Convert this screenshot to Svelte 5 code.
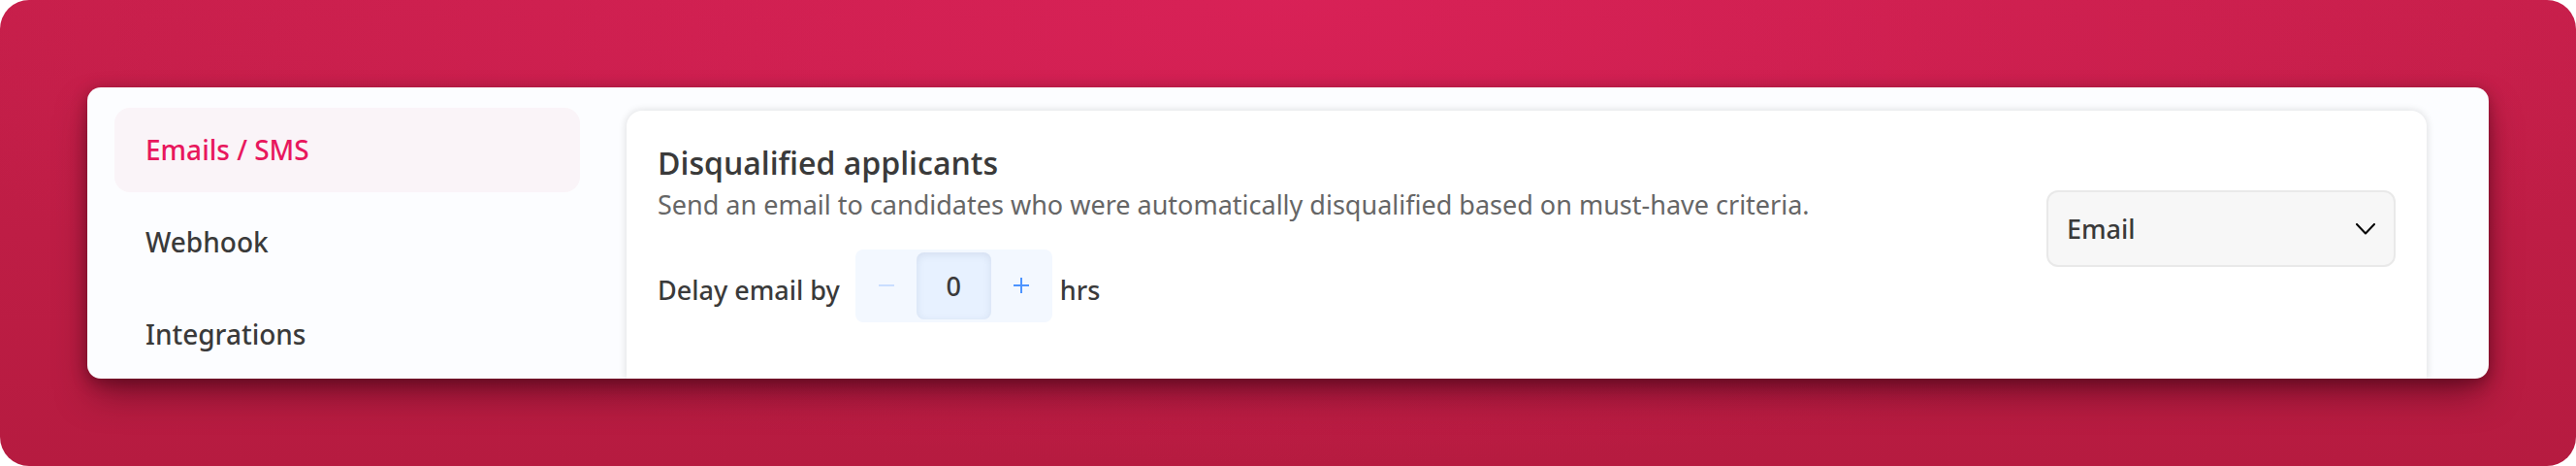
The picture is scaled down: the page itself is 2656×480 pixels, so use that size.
<script lang="ts">
  interface NavItem {
    id: string;
    label: string;
  }

  const navItems: NavItem[] = [
    { id: 'emails', label: 'Emails / SMS' },
    { id: 'webhook', label: 'Webhook' },
    { id: 'integrations', label: 'Integrations' },
  ];

  const channels = ['Email', 'SMS'];

  let currentItem = 'emails';
  let channel = 'Email';
  let delay = 0;

  function changeDelay(step: number) {
    delay = Math.max(0, Number(delay) + step);
  }
</script>

<main class="backdrop">
  <div class="panel">
    <nav class="sidebar">
      {#each navItems as item}
        <a
          href="#{item.id}"
          class:active={currentItem === item.id}
          on:click={() => currentItem = item.id}
        >{item.label}</a>
      {/each}
    </nav>

    <section class="card">
      <div class="details">
        <h2>Disqualified applicants</h2>
        <p class="description">
          Send an email to candidates who were automatically disqualified based on must-have criteria.
        </p>

        <div class="delay-row">
          <label for="delay">Delay email by</label>
          <div class="stepper">
            <button aria-label="Decrease" disabled={delay <= 0} on:click={() => changeDelay(-1)}>
              <svg viewBox="0 0 17 17" width="17" height="17">
                <path d="M1 8h16" />
              </svg>
            </button>
            <input id="delay" type="text" inputmode="numeric" bind:value={delay} />
            <button aria-label="Increase" on:click={() => changeDelay(1)}>
              <svg viewBox="0 0 17 17" width="17" height="17">
                <path d="M0 8h16M8 0v16" />
              </svg>
            </button>
          </div>
          <span class="unit">hrs</span>
        </div>
      </div>

      <div class="select-box">
        <select aria-label="Channel" bind:value={channel}>
          {#each channels as c}
            <option value={c}>{c}</option>
          {/each}
        </select>
        <svg class="chevron" viewBox="0 0 20 12" width="20" height="12">
          <path d="M1 1l9 9.500l9-9.500" />
        </svg>
      </div>
    </section>
  </div>
</main>

<style>
  :global(body) {
    margin: 0;
    background: #fff;
    color: #3a3a3a;
    font-family: "Noto Sans", "Open Sans", sans-serif;
  }

  .backdrop {
    box-sizing: border-box;
    min-height: 100vh;
    padding: 90px;
    border-radius: 30px;
    background:
      radial-gradient(ellipse 55% 100% at 50% 0, rgba(224, 34, 92, 0.7), rgba(224, 34, 92, 0)),
      linear-gradient(#c61f4a, #b61b40);
  }

  .panel {
    display: flex;
    gap: 48px;
    padding-right: 64px;
    overflow: hidden;
    border-radius: 14px;
    background: #fcfdff;
    box-shadow: 0 20px 36px -6px rgba(50, 0, 15, 0.5), 0 4px 16px rgba(50, 0, 15, 0.4);
  }

  .sidebar {
    display: flex;
    flex: 0 0 480px;
    flex-direction: column;
    gap: 8px;
    padding: 21px 0 2px 28px;
  }

  .sidebar a {
    padding: 0 32px;
    border-radius: 16px;
    color: #3a3a3a;
    font-size: 28px;
    font-weight: 500;
    line-height: 87px;
    text-decoration: none;
  }

  .sidebar a.active {
    background: #faf4f8;
    color: #e8175d;
  }

  .card {
    display: flex;
    flex: 1;
    justify-content: space-between;
    align-items: flex-start;
    margin-top: 24px;
    padding: 32px;
    border-radius: 16px 16px 0 0;
    background: #fff;
    box-shadow: 0 0 8px rgba(0, 0, 0, 0.14);
  }

  h2 {
    margin: 0;
    font-family: "Open Sans", "Noto Sans", sans-serif;
    font-size: 32px;
    font-weight: 600;
    line-height: 44px;
  }

  .description {
    margin: 0;
    color: #666;
    font-size: 27px;
    line-height: 42px;
  }

  .delay-row {
    display: flex;
    align-items: center;
    margin-top: 25px;
    font-size: 27px;
    font-weight: 500;
  }

  .delay-row label,
  .unit {
    padding-top: 8px;
  }

  .unit {
    margin-left: 8px;
  }

  .stepper {
    display: flex;
    margin-left: 16px;
    padding: 3px 0;
    border-radius: 8px;
    background: #f3f8ff;
  }

  .stepper button {
    display: flex;
    justify-content: center;
    align-items: center;
    width: 63px;
    padding: 0;
    border: none;
    background: none;
    color: #4d94ff;
    cursor: pointer;
  }

  .stepper button:disabled {
    color: #c9deff;
    cursor: default;
  }

  .stepper input {
    box-sizing: border-box;
    width: 77px;
    height: 69px;
    padding: 0;
    border: none;
    border-radius: 8px;
    background: #e7f1ff;
    box-shadow: inset 0 2px 8px rgba(40, 60, 100, 0.1);
    color: #3a3a3a;
    font: inherit;
    text-align: center;
  }

  svg {
    fill: none;
    stroke: currentColor;
    stroke-width: 2;
  }

  .select-box {
    position: relative;
    flex: 0 0 360px;
    margin-top: 50px;
  }

  select {
    width: 100%;
    height: 79px;
    padding: 0 19px;
    border: 2px solid #e9e9e9;
    border-radius: 12px;
    appearance: none;
    background: #f7f7f7;
    color: #3a3a3a;
    font: inherit;
    font-size: 27px;
    font-weight: 500;
  }

  .chevron {
    position: absolute;
    top: 34px;
    right: 21px;
    color: #000;
    stroke-linecap: round;
    stroke-linejoin: round;
    pointer-events: none;
  }
</style>
